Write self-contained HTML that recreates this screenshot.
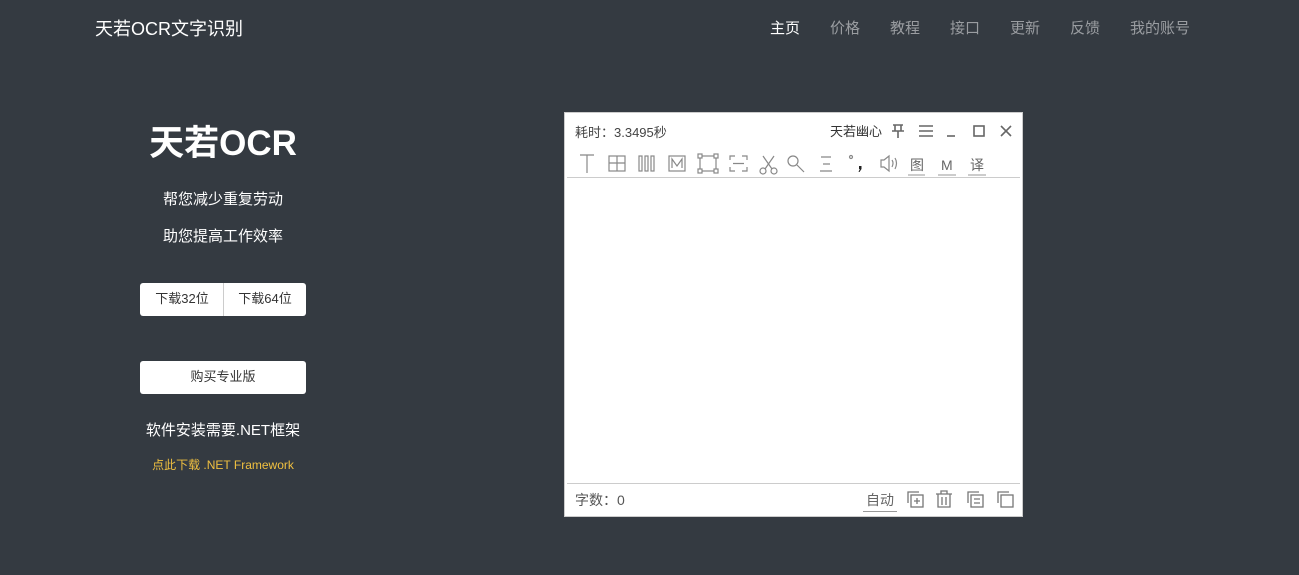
<!DOCTYPE html>
<html><head><meta charset="utf-8"><style>
*{margin:0;padding:0;box-sizing:border-box}
body{width:1299px;height:575px;background:#343a41;font-family:"Liberation Sans","Noto Sans CJK SC",sans-serif;position:relative;overflow:hidden}
.a{position:absolute;white-space:nowrap}
.nav{font-size:15px;color:#9a9da1;top:17px}
.c{text-align:center;color:#fff}
.btn{position:absolute;background:#fff;border-radius:3px;font-size:13px;color:#333;text-align:center;line-height:32px;height:33px}
.win{position:absolute;left:564px;top:112px;width:459px;height:405px;background:#fff;border:1px solid #ccc}
svg{position:absolute}
.ic{stroke:#888;fill:none;stroke-width:1.2}
</style></head><body>
<div class="a" style="left:95px;top:15px;font-size:18px;color:#fff">天若OCR文字识别</div>
<div class="a nav" style="left:770px;color:#fff">主页</div>
<div class="a nav" style="left:830px">价格</div>
<div class="a nav" style="left:890px">教程</div>
<div class="a nav" style="left:950px">接口</div>
<div class="a nav" style="left:1010px">更新</div>
<div class="a nav" style="left:1070px">反馈</div>
<div class="a nav" style="left:1130px">我的账号</div>

<div class="a c" style="left:123px;width:200px;top:115px;font-size:35px;font-weight:bold">天若OCR</div>
<div class="a c" style="left:123px;width:200px;top:188px;font-size:15px">帮您减少重复劳动</div>
<div class="a c" style="left:123px;width:200px;top:225px;font-size:15px">助您提高工作效率</div>
<div class="btn" style="left:140px;top:283px;width:84px;border-radius:3px 0 0 3px">下载32位</div>
<div class="btn" style="left:223px;top:283px;width:83px;border-left:1px solid #ccc;border-radius:0 3px 3px 0">下载64位</div>
<div class="btn" style="left:140px;top:361px;width:166px">购买专业版</div>
<div class="a c" style="left:123px;width:200px;top:419px;font-size:15px">软件安装需要.NET框架</div>
<div class="a c" style="left:123px;width:200px;top:456px;font-size:12px;color:#f0c040">点此下载 .NET Framework</div>

<div class="win">
<div class="a" style="left:10px;top:9px;font-size:13px;color:#444">耗时：3.3495秒</div>
<div class="a" style="left:265px;top:8px;font-size:13px;color:#333">天若幽心</div>
<svg style="left:326px;top:10px" width="130" height="16">
<g stroke="#666" stroke-width="1.6" fill="none">
<path d="M2 2h10M4 2v6M10 2v6M1 8h12M7 8v7"/>
<path d="M28 3h14M28 8h14M28 13h14"/>
<path d="M56 13h8"/>
<rect x="83" y="3" width="10" height="10"/>
<path d="M110 3l10 10M120 3l-10 10"/>
</g></svg>
<svg style="left:10px;top:40px" width="420" height="24">
<g class="ic">
<path d="M5 2h14M12 2v18"/>
<rect x="34" y="3" width="16" height="15"/><path d="M42 3v15M34 10h16"/>
<rect x="64" y="3" width="3" height="15"/><rect x="70" y="3" width="3" height="15"/><rect x="76" y="3" width="3" height="15"/>
<rect x="94" y="3" width="16" height="15"/><path d="M97 15V6l5 7 5-7v9"/>
<rect x="125" y="3" width="16" height="15"/><rect x="123" y="1" width="4" height="4" fill="#fff"/><rect x="139" y="1" width="4" height="4" fill="#fff"/><rect x="123" y="16" width="4" height="4" fill="#fff"/><rect x="139" y="16" width="4" height="4" fill="#fff"/>
<path d="M155 7V3h5M167 3h5v4M172 14v4h-5M160 18h-5v-4M158 10.5h11"/>
<circle cx="188" cy="18" r="3"/><circle cx="199" cy="18" r="3"/><path d="M190 16l9-13M197 16l-9-13"/>
<circle cx="218" cy="8" r="5"/><path d="M222 12l7 7"/>
<path d="M246 4h10M248 11h7M245 18h12"/>
<circle cx="276" cy="4" r="1.5"/>
<path d="M306 7h3l5-4v15l-5-4h-3zM317 7q2 3 0 7M320 5q3 5 0 11"/>
</g>
<g fill="#222" stroke="none"><path d="M284 13h2.5v3l-2 3h-1l1.3-3h-0.8z"/></g>
<g font-size="14" fill="#666" stroke="none"><text x="335" y="17">图</text><text x="366" y="17">M</text><text x="395" y="17" fill="#666">译</text></g>
<g stroke="#999" stroke-width="1"><path d="M333 22h17M363 22h18M393 22h18"/></g>
</svg>
<div style="position:absolute;left:2px;right:2px;top:64px;border-top:1px solid #ccc"></div>
<div style="position:absolute;left:2px;right:2px;top:370px;border-top:1px solid #ccc"></div>
<div class="a" style="left:10px;top:377px;font-size:14px;color:#555">字数：0</div>
<div class="a" style="left:298px;top:377px;font-size:14px;color:#666;border-bottom:1px solid #999;padding:0 3px 1px">自动</div>
<svg style="left:340px;top:376px" width="110" height="22">
<g stroke="#777" stroke-width="1.3" fill="none">
<path d="M3 14V3h11"/><rect x="6" y="6" width="12" height="12"/><path d="M12 9v6M9 12h6"/>
<path d="M31 5h16M36 5V2h6v3M33 5v13h12V5M37 8v8M41 8v8"/>
<path d="M63 14V3h11"/><rect x="66" y="6" width="12" height="12"/><path d="M69 10h6M69 14h6"/>
<path d="M93 14V3h11"/><rect x="96" y="6" width="12" height="12"/>
</g></svg>
</div>
</body></html>
